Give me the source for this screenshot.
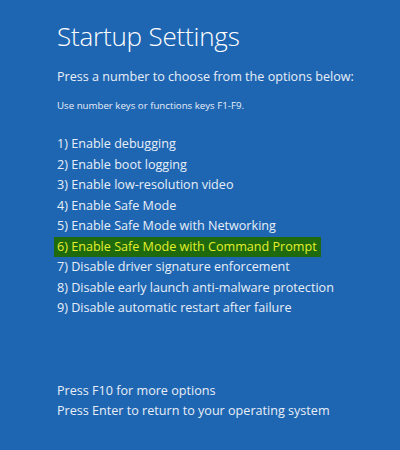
const options = [
  '1) Enable debugging',
  '2) Enable boot logging',
  '3) Enable low-resolution video',
  '4) Enable Safe Mode',
  '5) Enable Safe Mode with Networking',
  '6) Enable Safe Mode with Command Prompt',
  '7) Disable driver signature enforcement',
  '8) Disable early launch anti-malware protection',
  '9) Disable automatic restart after failure',
];

export default function App() {
  return (
    <div className="w-[400px] h-[450px] bg-[#1f66b2] text-[#e8eef7] font-['Open_Sans',sans-serif] pl-[57px] pt-[18px]">
      <h1 className="text-[26px] font-light leading-[36px] text-white tracking-[-0.2px]">Startup Settings</h1>
      <p className="mt-[14px] text-[12.6px] leading-[18px]">Press a number to choose from the options below:</p>
      <p className="mt-[13px] text-[9.7px] leading-[14px]">Use number keys or functions keys F1-F9.</p>
      <ul className="mt-[21px] text-[12.6px]">
        {options.map((o) => (
          <li key={o} className="h-[20.5px] leading-[20.5px]">
            {o.startsWith('6)') ? (
              <span className="inline-block -ml-[3px] pl-[3px] pr-[4px] bg-[#1f6a0c] text-[#e4f02c]">{o}</span>
            ) : (
              o
            )}
          </li>
        ))}
      </ul>
      <div className="mt-[62px] text-[12.6px] leading-[20.5px]">
        <p>Press F10 for more options</p>
        <p>Press Enter to return to your operating system</p>
      </div>
    </div>
  );
}
